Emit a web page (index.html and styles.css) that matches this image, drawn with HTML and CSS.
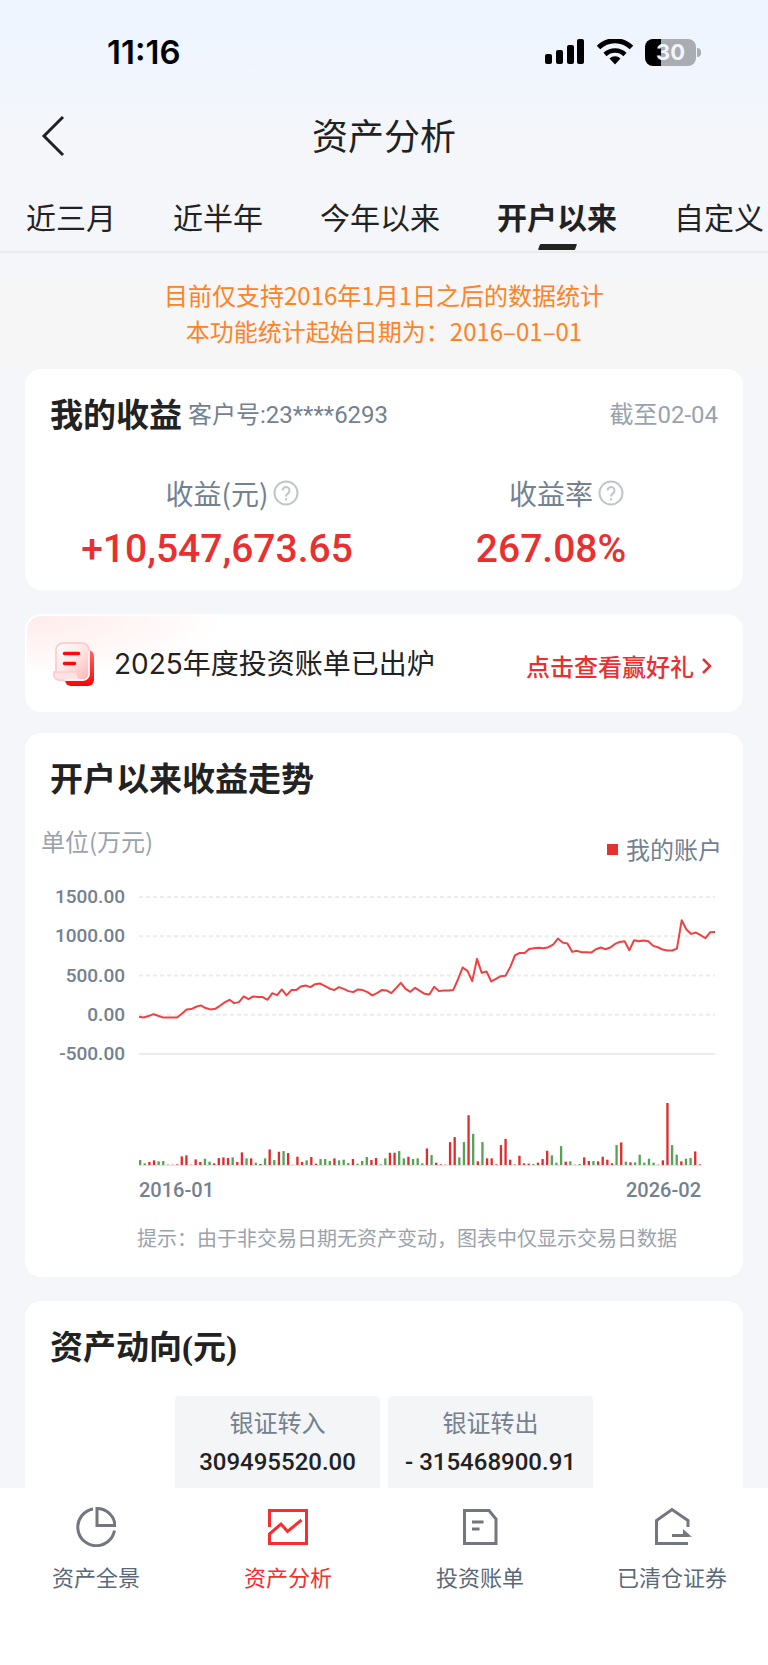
FILE: index.html
```
<!DOCTYPE html>
<html lang="zh-CN">
<head>
  <title>资产分析</title>
  <meta charset="UTF-8" />
  <meta name="viewport" content="width=device-width, initial-scale=1.0"/>
  <link rel="stylesheet" href="styles.css">
</head>
<body>
  <header>
    <div class="status">
      <span class="clock">11:16</span>
      <div class="status-icons">
        <svg width="40" height="26" viewBox="0 0 40 26">
          <rect x="0" y="15" width="7" height="10" rx="2"/>
          <rect x="11" y="11" width="7" height="14" rx="2"/>
          <rect x="22" y="6" width="7" height="19" rx="2"/>
          <rect x="32" y="0" width="7" height="25" rx="2"/>
        </svg>
        <svg width="36" height="26" viewBox="0 0 36 26">
          <path d="M1.5 9.5a23.5 23.5 0 0 1 33 0" fill="none" stroke="#000" stroke-width="5" transform="translate(0 -1)"/>
          <path d="M8 15.500a14.500 14.500 0 0 1 20 0" fill="none" stroke="#000" stroke-width="4.500"/>
          <path d="M12.500 19.500a8 8 0 0 1 11 0L18 25.500z"/>
        </svg>
        <div class="battery"><span>30</span></div>
      </div>
    </div>
    <div class="titlebar">
      <button class="back" aria-label="返回">
        <svg width="24" height="40" viewBox="0 0 24 40"><path d="M22 1L3 20l19 19" fill="none" stroke="#222" stroke-width="3"/></svg>
      </button>
      <h1>资产分析</h1>
    </div>
    <nav class="tabs">
      <a href="#">近三月</a>
      <a href="#">近半年</a>
      <a href="#">今年以来</a>
      <a href="#" class="active">开户以来</a>
      <a href="#">自定义</a>
    </nav>
  </header>

  <main>
    <div class="notice">
      目前仅支持2016年1月1日之后的数据统计<br/>
      本功能统计起始日期为：2016–01–01
    </div>

    <section class="card">
      <div class="card-head">
        <h2>我的收益</h2>
        <span class="account">客户号:23****6293</span>
        <span class="date">截至02-04</span>
      </div>
      <div class="metrics">
        <div>
          <div class="metric-label">收益(元)<button class="help" aria-label="收益说明"><svg width="26" height="26" viewBox="0 0 26 26"><circle cx="13" cy="13" r="11.500"/><path d="M9.500 10.500a3.500 3.500 0 1 1 5.500 2.900c-1.400 1-2 1.500-2 3M13 18.300v2.200"/></svg></button></div>
          <div class="metric-value">+10,547,673.65</div>
        </div>
        <div>
          <div class="metric-label">收益率<button class="help" aria-label="收益率说明"><svg width="26" height="26" viewBox="0 0 26 26"><circle cx="13" cy="13" r="11.500"/><path d="M9.500 10.500a3.500 3.500 0 1 1 5.500 2.900c-1.400 1-2 1.500-2 3M13 18.300v2.200"/></svg></button></div>
          <div class="metric-value">267.08%</div>
        </div>
      </div>
    </section>

    <a href="#" class="card banner">
      <svg width="42" height="44" viewBox="0 0 42 44">
        <defs>
          <linearGradient id="back" x1="0" y1="0" x2="0" y2="1"><stop offset="0" stop-color="#ff6a6a"/><stop offset="1" stop-color="#f80505"/></linearGradient>
          <linearGradient id="paper" x1="0" y1="0" x2="1" y2="1"><stop offset="0" stop-color="#fff"/><stop offset=".5" stop-color="#ffe6e6"/><stop offset="1" stop-color="#ffb3b3"/></linearGradient>
        </defs>
        <rect x="12" y="8" width="29" height="36" rx="6" fill="url(#back)"/>
        <path d="M10 1h19a7 7 0 0 1 7 7v24a6 6 0 0 1-6 6H6a5 5 0 0 1-5-5v-3h2V8a7 7 0 0 1 7-7z" fill="url(#paper)" stroke="#ffc4c4" stroke-width="1.500"/>
        <path d="M1 30h23v2a6 6 0 0 0 6 6H6a5 5 0 0 1-5-5z" fill="#ffe3e3" stroke="#ffc4c4"/>
        <path d="M36 9v23a6 6 0 0 1-6 6H12" fill="none" stroke="#fff" stroke-width="1.500"/>
        <path d="M11.500 11.500h14M11.500 21.500h10" stroke="#fa0a0a" stroke-width="3.500" stroke-linecap="round"/>
      </svg>
      <span class="banner-text">2025年度投资账单已出炉</span>
      <span class="banner-link">
        点击查看赢好礼
        <svg width="12" height="16" viewBox="0 0 12 16"><path d="M2 1l7 7-7 7" fill="none" stroke="#e93030" stroke-width="2.500"/></svg>
      </span>
    </a>

    <section class="card trend">
      <h2>开户以来收益走势</h2>
      <div class="legend-row">
        <span class="unit">单位(万元)</span>
        <span class="legend">我的账户</span>
      </div>
      <div class="chart">
        <div class="y-axis">
          <span>1500.00</span>
          <span>1000.00</span>
          <span>500.00</span>
          <span>0.00</span>
          <span>-500.00</span>
        </div>
        <svg id="line" class="line" viewBox="0 0 1210 2000" preserveAspectRatio="none">
          <path class="grid" d="M0 0H1210M0 500H1210M0 1000H1210M0 1500H1210"/>
          <path class="axis" d="M0 2000H1210"/>
        </svg>
        <div class="volume">
          <svg id="bars" class="bars" viewBox="0 0 1215 187" preserveAspectRatio="none"></svg>
          <div class="x-axis"><span>2016-01</span><span>2026-02</span></div>
        </div>
      </div>
      <p class="hint">提示：由于非交易日期无资产变动，图表中仅显示交易日数据</p>
    </section>

    <section class="card">
      <h2>资产动向<span class="paren">(</span>元<span class="paren">)</span></h2>
      <div class="flows">
        <div class="flow"><span>银证转入</span><strong>309495520.00</strong></div>
        <div class="flow"><span>银证转出</span><strong>- 315468900.91</strong></div>
      </div>
    </section>
  </main>

  <nav class="bottom">
    <a href="#">
      <svg width="40" height="40" viewBox="0 0 40 40"><path d="M17 2A18.500 18.500 0 1 0 38.500 23.500"/><path d="M21 1.500V18.500H39A18 18 0 0 0 21 1.500z"/></svg>
      资产全景
    </a>
    <a href="#" class="active">
      <svg width="40" height="40" viewBox="0 0 40 40"><path d="M1.500 20V3.500h37v33h-37V27L13 17l6.500 7.500L33.500 13"/></svg>
      资产分析
    </a>
    <a href="#">
      <svg width="40" height="40" viewBox="0 0 40 40"><path d="M4.500 3.500H29L36 12v24.500H4.500z"/><path d="M12 15h11.500M12 22h7.500"/></svg>
      投资账单
    </a>
    <a href="#">
      <svg width="40" height="40" viewBox="0 0 40 40"><path d="M36 36.500H4.500V13.500L20 2.500l16 11V20"/><path d="M20 28.500h17"/><path d="M31 29v-7l9 8z" class="solid"/></svg>
      已清仓证券
    </a>
  </nav>

  <script src="chart.js"></script>
</body>
</html>
```

FILE: styles.css
```
* { box-sizing: border-box; }
body {
  margin: 0;
  height: 100vh;
  display: flex;
  flex-direction: column;
  font-family: "Noto Sans CJK SC", sans-serif;
  color: #222;
  background: linear-gradient(#eef5ff, #f0f5fe 60px, #f4f6fa 130px);
}
h1, h2, p { margin: 0; }
a { color: inherit; text-decoration: none; }
button { padding: 0; border: none; background: none; cursor: pointer; }
svg { display: block; flex: none; }

/* header */
.status {
  height: 104px;
  padding: 0 72px 0 107px;
  display: flex;
  align-items: center;
  justify-content: space-between;
}
.clock { font: 600 33px/40px Inter, sans-serif; color: #000; }
.status-icons { display: flex; align-items: center; gap: 12px; }
.battery {
  position: relative;
  width: 51px;
  height: 27px;
  border-radius: 8px;
  background: linear-gradient(90deg, #000 16px, #a9acb2 16px);
  color: #f0f5fe;
  font: 700 22px/27px Inter, sans-serif;
  text-align: center;
}
.battery::after {
  content: "";
  position: absolute;
  left: 52px;
  top: 9px;
  width: 4px;
  height: 9px;
  border-radius: 0 4px 4px 0;
  background: #a9acb2;
}
.titlebar {
  height: 64px;
  padding: 0 41px;
  display: grid;
  grid-template-columns: 24px 1fr 24px;
  align-items: center;
}
.titlebar h1 { padding-bottom: 4px; font-size: 36px; font-weight: 400; line-height: 48px; text-align: center; }
.tabs {
  display: flex;
  gap: 57px;
  padding: 25px 0 1px 26px;
  border-bottom: 2px solid #eaebed;
  overflow: hidden;
  white-space: nowrap;
}
.tabs a { flex: none; font-size: 30px; line-height: 46px; }
.tabs a::after {
  content: "";
  display: block;
  width: 37px;
  height: 6px;
  margin: 5px auto 0;
  border-radius: 1px;
  transform: skewX(-20deg);
}
.tabs .active { font-weight: 700; }
.tabs .active::after { background: #222; }

/* content */
main { flex: 1; min-height: 0; overflow: auto; scrollbar-width: none; }
.notice {
  margin-top: 24px;
  padding-bottom: 20px;
  background: #f6f6f6;
  color: #ff8226;
  font-size: 24px;
  line-height: 36px;
  text-align: center;
}
.card {
  margin: 0 25px 24px;
  padding: 24px 25px;
  border-radius: 16px;
  background: #fff;
}
.card h2 { font-size: 33px; line-height: 40px; font-weight: 700; }
.card-head { display: flex; align-items: center; height: 40px; font: 24px/40px Roboto, "Noto Sans CJK SC", sans-serif; }
.card-head h2 { font-family: "Noto Sans CJK SC", sans-serif; }
.card-head span { padding-top: 4px; }
.account { margin-left: 6px; color: #738190; }
.date { margin-left: auto; color: #9aa3ad; }

.metrics { display: grid; grid-template-columns: 1fr 1fr; margin: 40px 0 -7px; text-align: center; }
.metric-label {
  position: relative;
  width: fit-content;
  margin: 0 auto 12px;
  color: #738190;
  font-size: 28px;
  line-height: 40px;
}
.help { position: absolute; left: 100%; top: 7px; margin-left: 5px; }
.help svg { fill: none; stroke: #c1c5cb; stroke-width: 2; }
.metric-value { color: #e93030; font: 500 39px/48px Roboto, sans-serif; }

.banner {
  display: flex;
  align-items: center;
  height: 98px;
  margin-bottom: 21px;
  padding: 2px 28px 0 26px;
  border: 2px solid #fff;
  background: radial-gradient(ellipse 200px 60px at 0 0, #ffebeb, #fff) padding-box, #fff;
}
.banner-text { margin-left: 19px; font: 28px/40px Inter, "Noto Sans CJK SC", sans-serif; }
.banner-link {
  display: flex;
  align-items: center;
  gap: 7px;
  margin-left: auto;
  padding-top: 4px;
  color: #e93030;
  font-size: 24px;
  font-weight: 500;
  line-height: 40px;
}

/* profit chart */
.legend-row {
  display: flex;
  justify-content: space-between;
  margin: 28px -4px 22px -9px;
  font-size: 24px;
  line-height: 32px;
}
.unit { color: #9aa3ad; }
.legend { display: flex; align-items: center; gap: 8px; margin-top: 8px; color: #738190; }
.legend::before { content: ""; width: 11px; height: 11px; background: #e93030; }
.chart {
  display: grid;
  grid-template-columns: 75px 1fr;
  column-gap: 14px;
  margin-right: 3px;
  color: #738190;
  font: 500 19px/20px Roboto, sans-serif;
}
.y-axis { display: flex; flex-direction: column; justify-content: space-between; text-align: right; }
.line { width: 100%; height: 157px; margin: 10px 0; overflow: visible; }
.line path, .line polyline { fill: none; vector-effect: non-scaling-stroke; }
.grid { stroke: #ececee; stroke-width: 2; stroke-dasharray: 4 3; }
.axis { stroke: #ececee; stroke-width: 2; }
.profit { stroke: #f04040; stroke-width: 2; stroke-linejoin: round; }
.volume { grid-column: 2; margin: 39px 14px 0 0; }
.bars { width: 100%; height: 63px; border-bottom: 1px solid #e4e4e6; }
.up { fill: #e22b2b; }
.down { fill: #57a257; }
.x-axis { display: flex; justify-content: space-between; margin-top: 12px; font-size: 20px; line-height: 24px; }
.hint { margin: 21px 0 0 46px; color: #9aa3ad; font-size: 20px; line-height: 30px; text-align: center; }

/* cash flows */
.paren { font-family: "Liberation Serif", serif; }
.flows { display: flex; justify-content: center; gap: 8px; margin-top: 28px; }
.flow {
  width: 205px;
  padding: 10px 0 32px;
  border-radius: 4px;
  background: #f4f5f7;
  text-align: center;
}
.flow span { display: block; margin-bottom: 8px; color: #738190; font-size: 24px; line-height: 32px; }
.flow strong { display: block; font: 500 24px/32px Roboto, sans-serif; }

/* bottom bar */
.bottom {
  flex: none;
  height: 177px;
  padding-top: 19px;
  display: grid;
  grid-template-columns: repeat(4, 1fr);
  background: #fff;
}
.bottom a {
  display: flex;
  flex-direction: column;
  align-items: center;
  gap: 15px;
  color: #5b6878;
  font-size: 22px;
  line-height: 28px;
}
.bottom svg { fill: none; stroke: #74767f; stroke-width: 3; }
.bottom .solid { fill: #74767f; stroke: none; }
.bottom .active { color: #f92c30; }
.bottom .active svg { stroke: #f92c30; }
```

FILE: chart.js
```
// monthly cumulative profit, in 万元
const profit = [
  -25, -34, -17, 8, -13, -34, -34, -34, -34, 13, 68, 72, 102, 119, 85, 68, 76, 114, 157, 191,
  148, 161, 233, 199, 233, 225, 225, 191, 275, 250, 322, 246, 314, 314, 360, 373, 352, 390, 398, 369,
  335, 314, 352, 330, 301, 288, 322, 314, 288, 246, 275, 314, 309, 275, 339, 407, 330, 292, 343, 305,
  267, 258, 356, 301, 309, 309, 314, 449, 602, 559, 428, 712, 534, 551, 424, 458, 491, 496, 610, 758,
  788, 788, 839, 847, 852, 847, 860, 894, 970, 919, 907, 801, 814, 797, 797, 792, 835, 856, 835, 856,
  902, 928, 936, 822, 949, 936, 945, 936, 877, 860, 830, 818, 818, 843, 1203, 1085, 1030, 1047, 1013, 975,
  1051, 1055
];

// monthly change, gains are red and losses green
const change = [
  -15, -5, 9, 14, -11, -12, 1, 1, 2, 26, 29, 1, 17, 9, -19, -10, 5, 21, 23, 21,
  -23, 9, 38, -20, 20, -7, 3, -20, 47, -15, 40, -42, 36, -1, 25, 9, -14, 24, 4, -18,
  -18, -12, 20, -14, -16, -6, 18, -4, -12, -24, 15, 21, -2, -20, 37, 37, -42, -20, 25, -18,
  -20, -5, 50, -30, 7, 2, 1, 69, 84, -23, -69, 150, -94, 11, -69, 20, 20, 2, 60, 79,
  16, -2, 28, 5, 4, -3, 7, 18, 43, -29, -7, -57, 10, -11, 1, -3, 23, 12, -12, 11,
  25, 16, 5, -60, 68, -10, 8, -8, -31, -7, -19, -7, 1, 14, 187, -60, -31, 11, -19, -21,
  41, 2
];

const ns = "http://www.w3.org/2000/svg";

const line = document.createElementNS(ns, "polyline");
line.setAttribute("class", "profit");
line.setAttribute("points", profit.map((v, i) => `${i * 10},${1500 - v}`).join(" "));
document.getElementById("line").appendChild(line);

const bars = document.getElementById("bars");
change.forEach((v, i) => {
  const bar = document.createElementNS(ns, "rect");
  const h = Math.abs(v);
  bar.setAttribute("class", v > 0 ? "up" : "down");
  bar.setAttribute("x", i * 10);
  bar.setAttribute("y", 187 - h);
  bar.setAttribute("width", 5);
  bar.setAttribute("height", h);
  bars.appendChild(bar);
});
```
